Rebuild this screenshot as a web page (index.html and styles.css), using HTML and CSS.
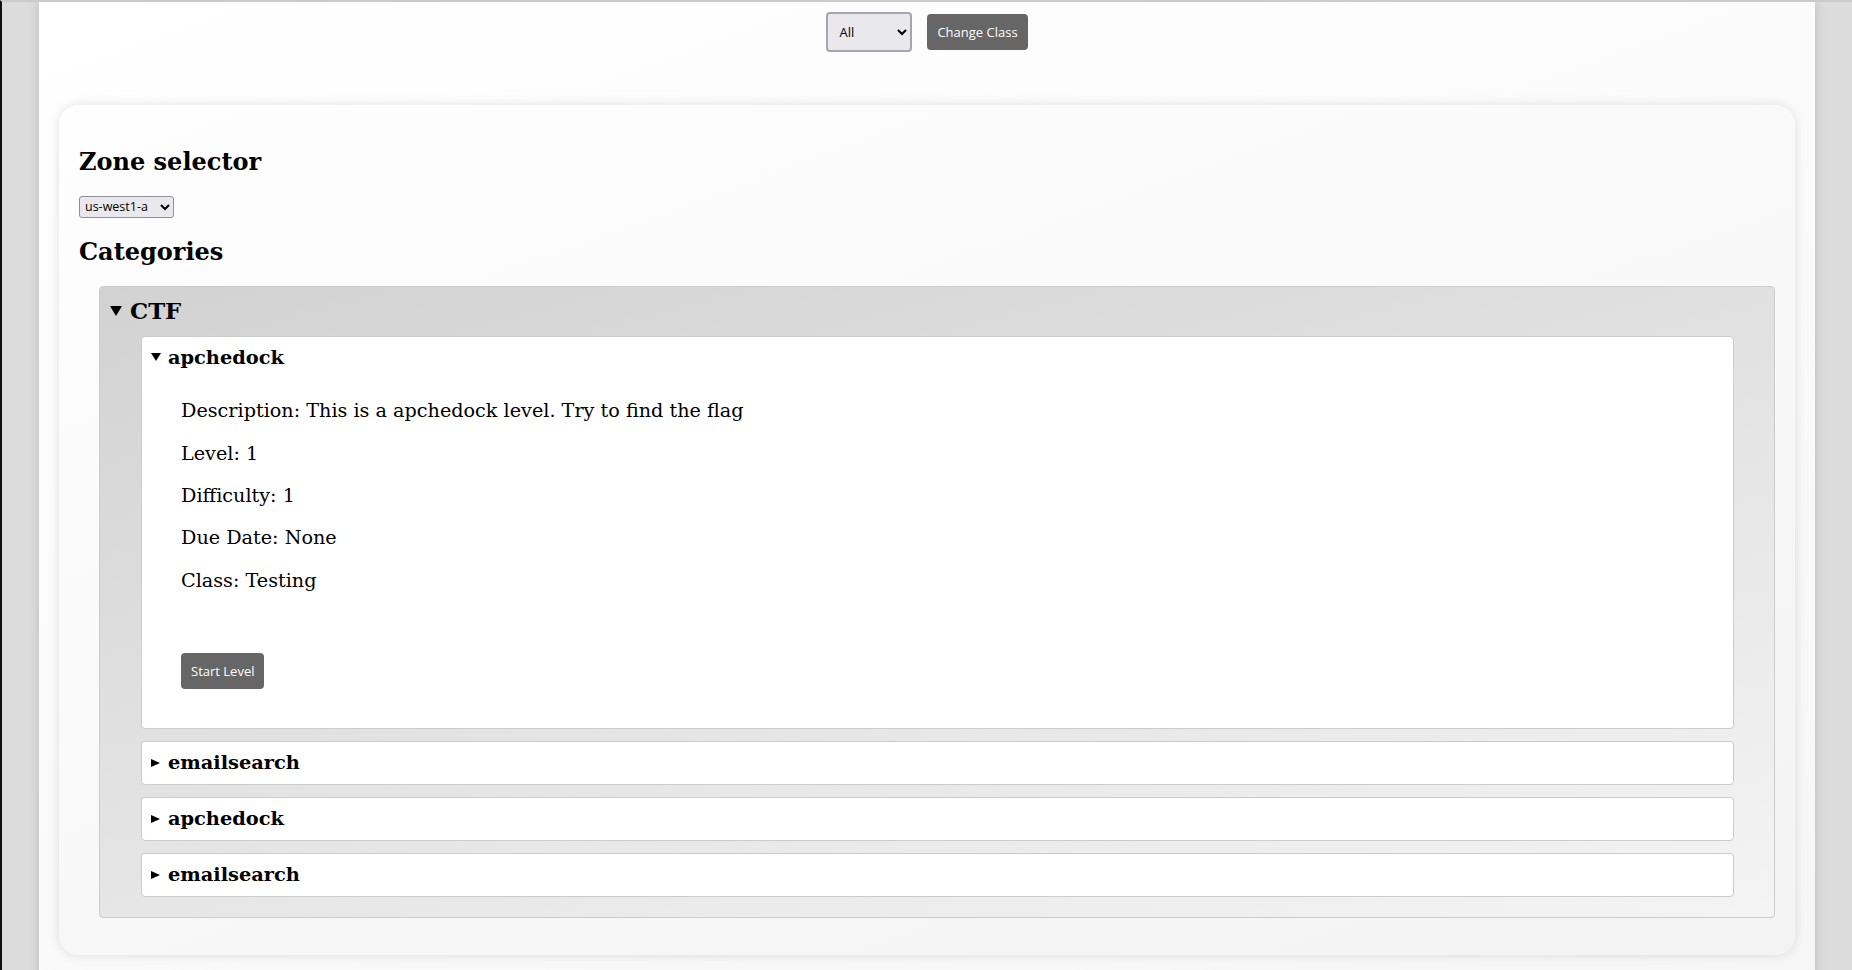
FILE: index.html
```html
<!DOCTYPE html>
<html lang="en">

<head>
    <meta charset="utf-8">
    <title>Levels</title>
    <link rel="stylesheet" href="styles.css">
</head>

<body>
    <div class="page">
        <!-- class filter -->
        <form class="class-picker" id="classForm">
            <select id="classSelect" class="class-select">
                <option>All</option>
                <option>Testing</option>
            </select>
            <button type="submit" class="btn">Change Class</button>
        </form>

        <div class="card">
            <h2>Zone selector</h2>
            <select id="zoneSelect" class="zone-select">
                <option>us-west1-a</option>
                <option>us-west1-b</option>
            </select>

            <h2>Categories</h2>
            <details class="category" open>
                <summary>CTF</summary>

                <details class="level" open>
                    <summary>apchedock</summary>
                    <div class="level-body">
                        <p>Description: This is a apchedock level. Try to find the flag</p>
                        <p>Level: 1</p>
                        <p>Difficulty: 1</p>
                        <p>Due Date: None</p>
                        <p>Class: Testing</p>
                        <div class="level-actions">
                            <button class="btn">Start Level</button>
                        </div>
                    </div>
                </details>

                <details class="level">
                    <summary>emailsearch</summary>
                </details>

                <details class="level">
                    <summary>apchedock</summary>
                </details>

                <details class="level">
                    <summary>emailsearch</summary>
                </details>
            </details>
        </div>
    </div>

    <script>
        document.getElementById('classForm').addEventListener('submit', (e) => {
            e.preventDefault();
        });
    </script>
</body>

</html>
```

FILE: styles.css
```css
body {
    margin: 0;
    padding: 0;
    background-color: #dcdcdc;
    border-top: 2px solid #cbcbcb;
    border-left: 2px solid #111;
    font-family: 'DejaVu Serif', serif;
    color: #000;
}

.page {
    width: 1736px;
    min-height: 100vh;
    margin: 0 auto;
    padding: 0 20px 20px;
    background: linear-gradient(160deg, #ffffff, #f6f6f6);
    box-shadow: 0 0 10px rgba(0, 0, 0, 0.15);
}

/* Class filter row */
.class-picker {
    display: flex;
    justify-content: center;
    align-items: center;
    gap: 15px;
    padding-top: 10px;
    height: 40px;
    margin: 0;
}

.class-select {
    width: 86px;
    height: 40px;
    padding: 0 8px 0 7px;
    font-family: 'Open Sans', 'DejaVu Sans', sans-serif;
    font-size: 13px;
    color: #000;
    background-color: #e9e9ed;
    border: 2px solid #a5a5ab;
    border-radius: 4px;
}

.btn {
    height: 36px;
    padding: 0 10px;
    font-family: 'Open Sans', 'DejaVu Sans', sans-serif;
    font-size: 13px;
    color: white;
    background-color: #666;
    border: none;
    border-radius: 4px;
    cursor: pointer;
}

.btn:hover {
    background-color: #555;
}

/* Main card */
.card {
    margin-top: 53px;
    padding: 22.7px 20px 20px;
    border-radius: 20px;
    background: linear-gradient(160deg, #fefefe, #f3f3f3);
    box-shadow: 0 0 12px rgba(0, 0, 0, 0.12);
}

h2 {
    margin: 20px 0;
    font-size: 24px;
    line-height: 28px;
    font-weight: bold;
}

.zone-select {
    display: block;
    width: 95px;
    height: 22px;
    padding: 0 2px 0 1px;
    font-family: 'Open Sans', 'DejaVu Sans', sans-serif;
    font-size: 12.5px;
    color: #000;
    background-color: #e9e9ed;
    border: 1px solid #8f8f9d;
    border-radius: 3px;
}

/* Category block */
.category {
    margin: 0 0 17px 20px;
    padding: 11px 10px 20px;
    border: 1px solid #ccc;
    border-radius: 4px;
    background: linear-gradient(165deg, #d2d2d2, #f4f4f4);
}

summary {
    list-style: none;
    cursor: pointer;
    font-weight: bold;
}

summary::-webkit-details-marker {
    display: none;
}

.category > summary {
    margin-bottom: 11.5px;
    font-size: 22.8px;
    line-height: 26.5px;
}

.category > summary::before {
    content: "";
    display: inline-block;
    margin-right: 8px;
    vertical-align: 2.6px;
    border-left: 6px solid transparent;
    border-right: 6px solid transparent;
    border-top: 10px solid #000;
}

/* Level rows */
.level {
    margin: 0 30px 12px 31px;
    border: 1px solid #ccc;
    border-radius: 4px;
    background-color: #fff;
}

.level:last-child {
    margin-bottom: 0;
}

.level > summary {
    padding: 10px 10px 10px 9px;
    font-size: 19.36px;
    line-height: 22px;
}

.level > summary::before {
    content: "";
    display: inline-block;
    margin-right: 8px;
    vertical-align: 1.7px;
    border-top: 4px solid transparent;
    border-bottom: 4px solid transparent;
    border-left: 9px solid #000;
}

.level[open] > summary::before {
    margin-right: 7px;
    vertical-align: 3px;
    border-left: 5px solid transparent;
    border-right: 5px solid transparent;
    border-top: 8px solid #000;
    border-bottom: none;
}

.level-body {
    padding: 2px 39px 39px;
}

.level-body p {
    margin: 19.8px 0;
    font-size: 19.2px;
    line-height: 22.5px;
}

.level-actions {
    padding-top: 41.2px;
}
```
